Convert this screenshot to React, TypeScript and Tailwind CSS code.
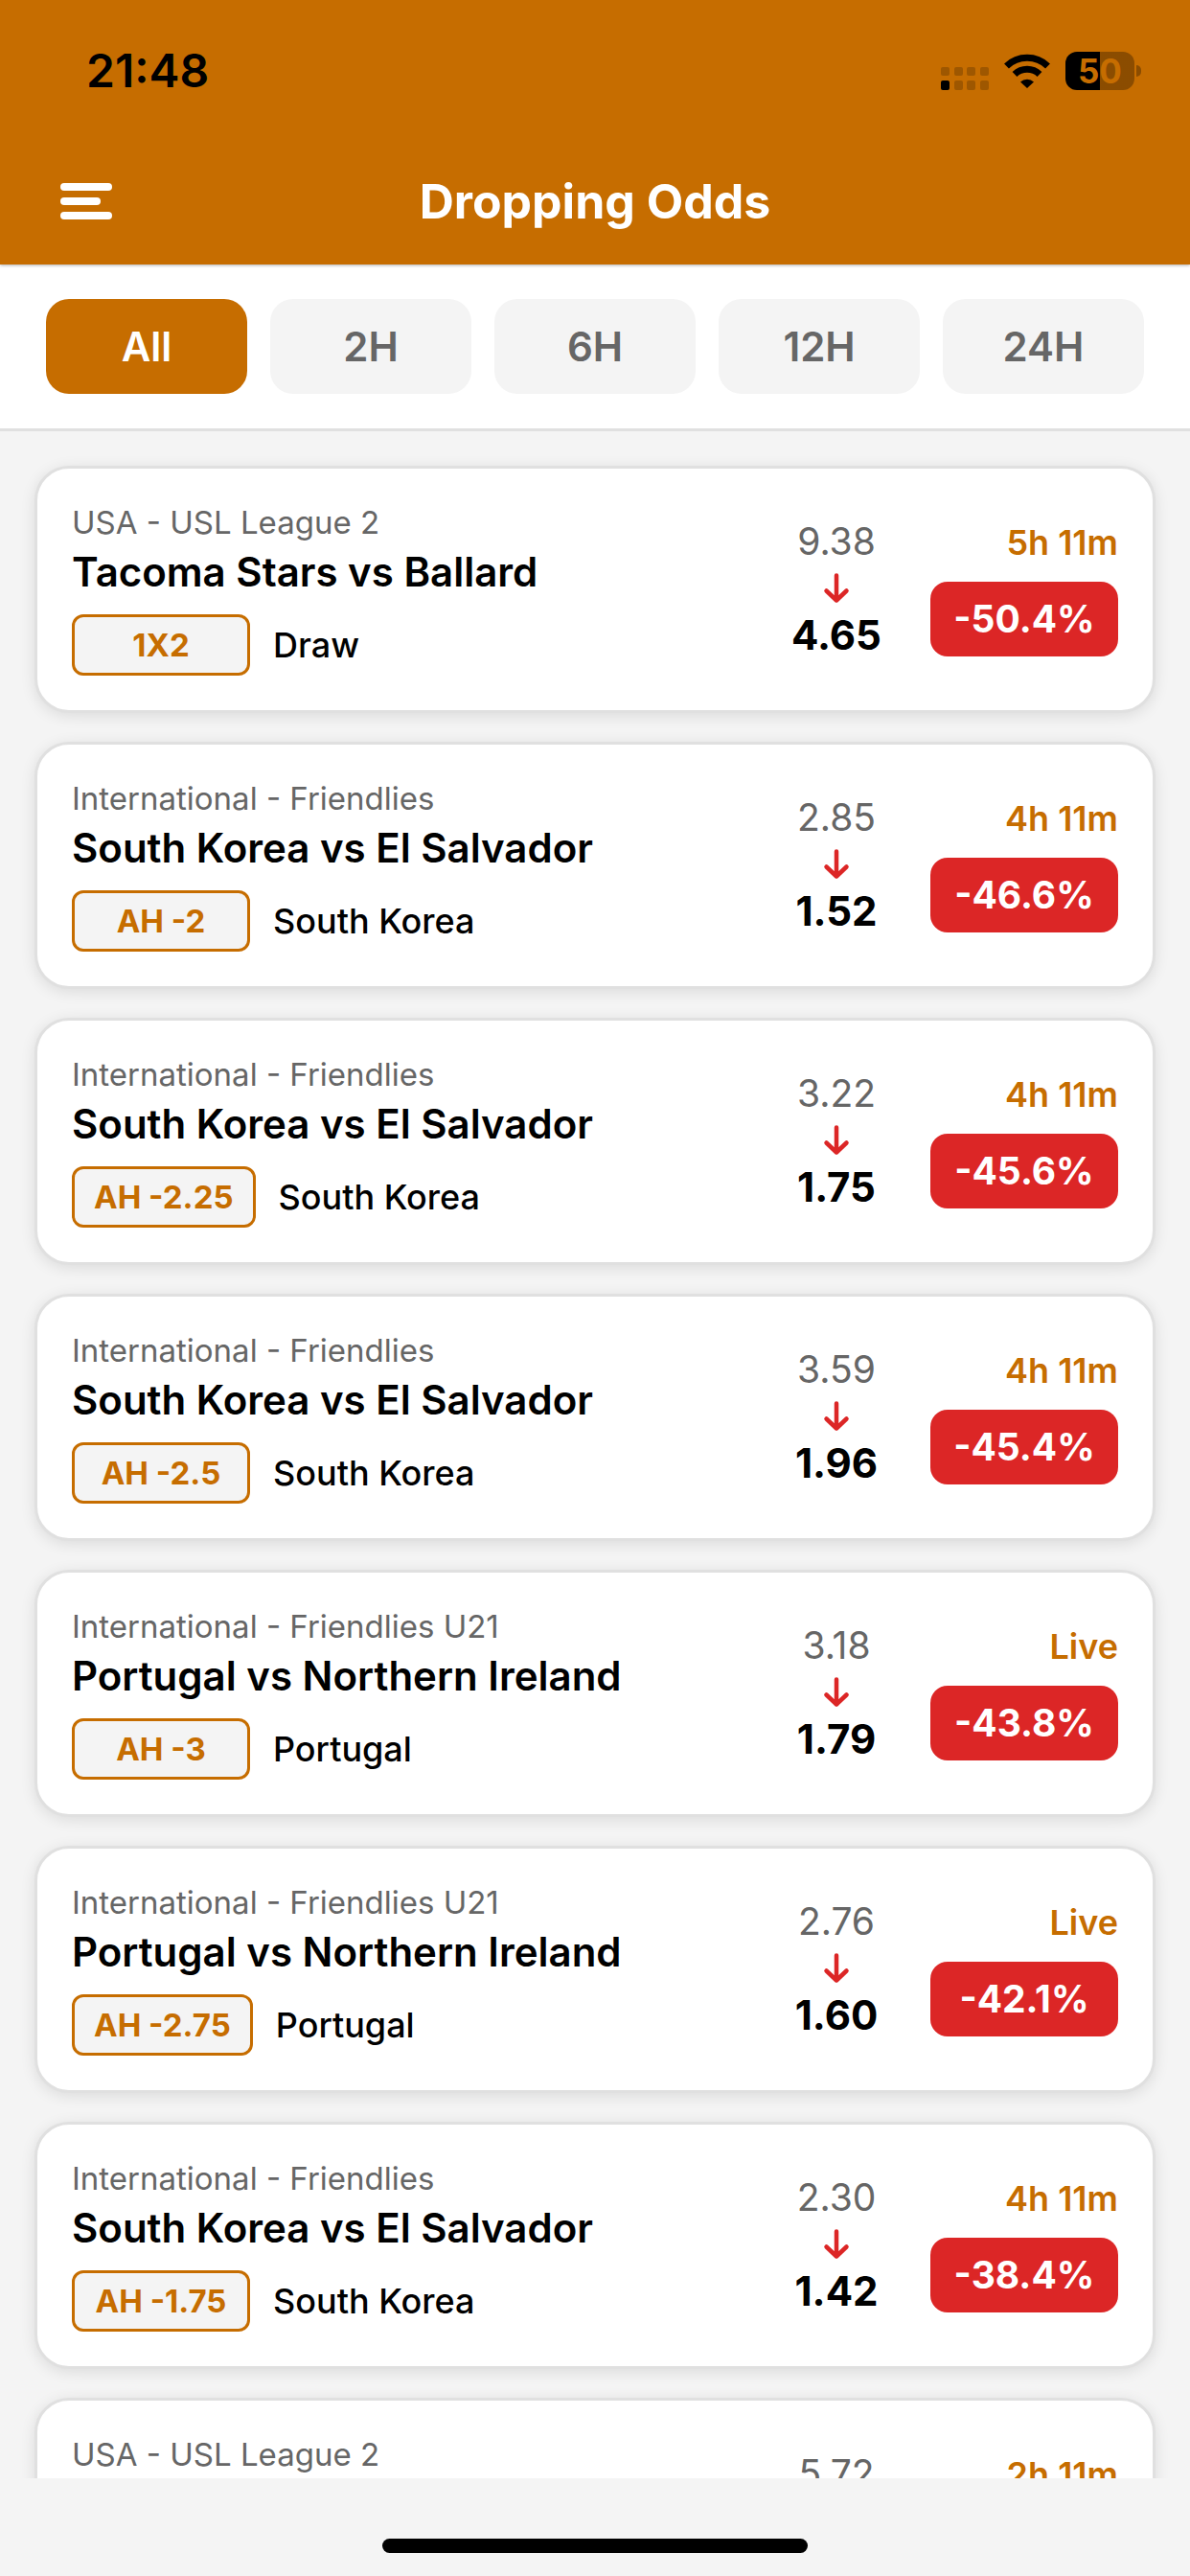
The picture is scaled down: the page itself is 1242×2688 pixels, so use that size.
import { useState } from "react";

const filters = ["All", "2H", "6H", "12H", "24H"];

type Drop = {
  id: number;
  league: string;
  match: string;
  market: string;
  pick: string;
  from: string;
  to: string;
  startsIn: string;
  change: string;
};

const drops: Drop[] = [
  {
    id: 1,
    league: "USA - USL League 2",
    match: "Tacoma Stars vs Ballard",
    market: "1X2",
    pick: "Draw",
    from: "9.38",
    to: "4.65",
    startsIn: "5h 11m",
    change: "-50.4%",
  },
  {
    id: 2,
    league: "International - Friendlies",
    match: "South Korea vs El Salvador",
    market: "AH -2",
    pick: "South Korea",
    from: "2.85",
    to: "1.52",
    startsIn: "4h 11m",
    change: "-46.6%",
  },
  {
    id: 3,
    league: "International - Friendlies",
    match: "South Korea vs El Salvador",
    market: "AH -2.25",
    pick: "South Korea",
    from: "3.22",
    to: "1.75",
    startsIn: "4h 11m",
    change: "-45.6%",
  },
  {
    id: 4,
    league: "International - Friendlies",
    match: "South Korea vs El Salvador",
    market: "AH -2.5",
    pick: "South Korea",
    from: "3.59",
    to: "1.96",
    startsIn: "4h 11m",
    change: "-45.4%",
  },
  {
    id: 5,
    league: "International - Friendlies U21",
    match: "Portugal vs Northern Ireland",
    market: "AH -3",
    pick: "Portugal",
    from: "3.18",
    to: "1.79",
    startsIn: "Live",
    change: "-43.8%",
  },
  {
    id: 6,
    league: "International - Friendlies U21",
    match: "Portugal vs Northern Ireland",
    market: "AH -2.75",
    pick: "Portugal",
    from: "2.76",
    to: "1.60",
    startsIn: "Live",
    change: "-42.1%",
  },
  {
    id: 7,
    league: "International - Friendlies",
    match: "South Korea vs El Salvador",
    market: "AH -1.75",
    pick: "South Korea",
    from: "2.30",
    to: "1.42",
    startsIn: "4h 11m",
    change: "-38.4%",
  },
  {
    id: 8,
    league: "USA - USL League 2",
    match: "Tacoma Stars vs Ballard",
    market: "1X2",
    pick: "Draw",
    from: "5.72",
    to: "3.60",
    startsIn: "2h 11m",
    change: "-37.1%",
  },
];

function SignalIcon() {
  return (
    <svg width="50" height="40" viewBox="0 -16 50 40" aria-hidden="true">
      {[0, 14, 27, 41].map((x) => (
        <g key={x}>
          <rect x={x} y="0" width="9" height="9" rx="2" fillOpacity="0.2" />
          <rect x={x} y="14" width="9" height="10" rx="2" fillOpacity={x === 0 ? 1 : 0.2} />
        </g>
      ))}
    </svg>
  );
}

function WifiIcon() {
  return (
    <svg width="48" height="36" viewBox="0 0 48 36" fill="none" aria-hidden="true">
      <path d="M2.5 13A31 31 0 0 1 45.5 13" stroke="black" strokeWidth="7" />
      <path d="M11 21.5A19 19 0 0 1 37 21.5" stroke="black" strokeWidth="7" />
      <path d="M24 36L17 29.5A10 10 0 0 1 31 29.5Z" fill="black" />
    </svg>
  );
}

function Battery() {
  return (
    <div className="flex items-center gap-[2px]" role="img" aria-label="Battery 50%">
      <div className="flex h-10 w-[72px] items-center justify-center rounded-xl bg-linear-to-r from-black from-50% to-black/30 to-50% text-[35px] leading-10 font-bold text-[#c66d00]">
        50
      </div>
      <div className="h-3 w-[5px] rounded-r-full bg-black/30" />
    </div>
  );
}

function ArrowDown() {
  return (
    <svg width="36" height="36" viewBox="0 0 36 36" fill="none" aria-hidden="true">
      <path
        d="M18 5.500V31M7.500 21.500L18 31.500L28.500 21.500"
        stroke="#dc2626"
        strokeWidth="4.500"
        strokeLinecap="round"
        strokeLinejoin="round"
      />
    </svg>
  );
}

function DropCard({ drop }: { drop: Drop }) {
  return (
    <li className="flex shrink-0 items-center rounded-[36px] border-[3px] border-[#e0e0e0] bg-white p-9 shadow-[0_3px_15px_rgba(0,0,0,0.1)]">
      <div className="min-w-0 flex-1">
        <p className="text-[33px] leading-10 text-[#666666]">{drop.league}</p>
        <h2 className="mt-1.5 truncate text-[42px] leading-[52px] font-semibold">{drop.match}</h2>
        <div className="mt-[18px] flex items-center gap-6">
          <span className="min-w-[186px] rounded-xl border-[3px] border-[#c66d00] bg-[#f4f4f4] px-5 text-center text-[33px] leading-[58px] font-bold text-[#c66d00]">
            {drop.market}
          </span>
          <span className="text-[36px] leading-[42px] font-medium">{drop.pick}</span>
        </div>
      </div>

      <div className="flex w-[180px] shrink-0 flex-col items-center gap-[7px]">
        <span className="text-[39px] leading-[46px] text-[#666666]">{drop.from}</span>
        <ArrowDown />
        <span className="text-[42px] leading-[50px] font-bold">{drop.to}</span>
      </div>

      <div className="flex w-[204px] shrink-0 flex-col items-end gap-5">
        <span className="text-[36px] leading-[42px] font-semibold text-[#c66d00]">{drop.startsIn}</span>
        <span className="min-w-[196px] rounded-[18px] bg-[#dc2626] px-6 text-center text-[39px] leading-[78px] font-bold text-white">
          {drop.change}
        </span>
      </div>
    </li>
  );
}

export default function App() {
  const [active, setActive] = useState("All");

  return (
    <div className="flex h-screen flex-col bg-[#f4f4f4] font-['Inter',sans-serif] text-black">
      <header className="relative z-10 bg-[#c66d00] shadow-[0_1px_3px_rgba(0,0,0,0.3)]">
        <div className="flex h-[148px] items-center justify-between pr-[51px] pl-[90px]">
          <time className="text-[48px] leading-[58px] font-semibold">21:48</time>
          <div className="flex items-center gap-4">
            <SignalIcon />
            <WifiIcon />
            <Battery />
          </div>
        </div>
        <div className="grid h-[128px] grid-cols-[54px_1fr_54px] items-center px-[63px] pb-1">
          <button type="button" aria-label="Open menu">
            <svg width="54" height="38" viewBox="0 0 54 38" fill="white" aria-hidden="true">
              <rect width="54" height="8" rx="4" />
              <rect y="15" width="42" height="8" rx="4" />
              <rect y="30" width="54" height="8" rx="4" />
            </svg>
          </button>
          <h1 className="text-center text-[50px] leading-[60px] font-bold text-white">Dropping Odds</h1>
        </div>
      </header>

      <nav
        aria-label="Time window"
        className="grid grid-cols-5 gap-6 border-b-[3px] border-[#e0e0e0] bg-white px-12 py-9"
      >
        {filters.map((f) => (
          <button
            key={f}
            type="button"
            aria-pressed={f === active}
            onClick={() => setActive(f)}
            className={
              f === active
                ? "rounded-3xl bg-[#c66d00] text-[42px] leading-[99px] font-semibold text-white"
                : "rounded-3xl bg-[#f4f4f4] text-[42px] leading-[99px] font-semibold text-[#666666]"
            }
          >
            {f}
          </button>
        ))}
      </nav>

      <main className="min-h-0 flex-1 overflow-y-auto [scrollbar-width:none]">
        <ul className="flex flex-col gap-[30px] px-9 py-9">
          {drops.map((drop) => (
            <DropCard key={drop.id} drop={drop} />
          ))}
        </ul>
      </main>

      <footer className="flex h-[102px] shrink-0 items-end justify-center pb-6">
        <div className="h-[15px] w-[444px] rounded-full bg-black" />
      </footer>
    </div>
  );
}
